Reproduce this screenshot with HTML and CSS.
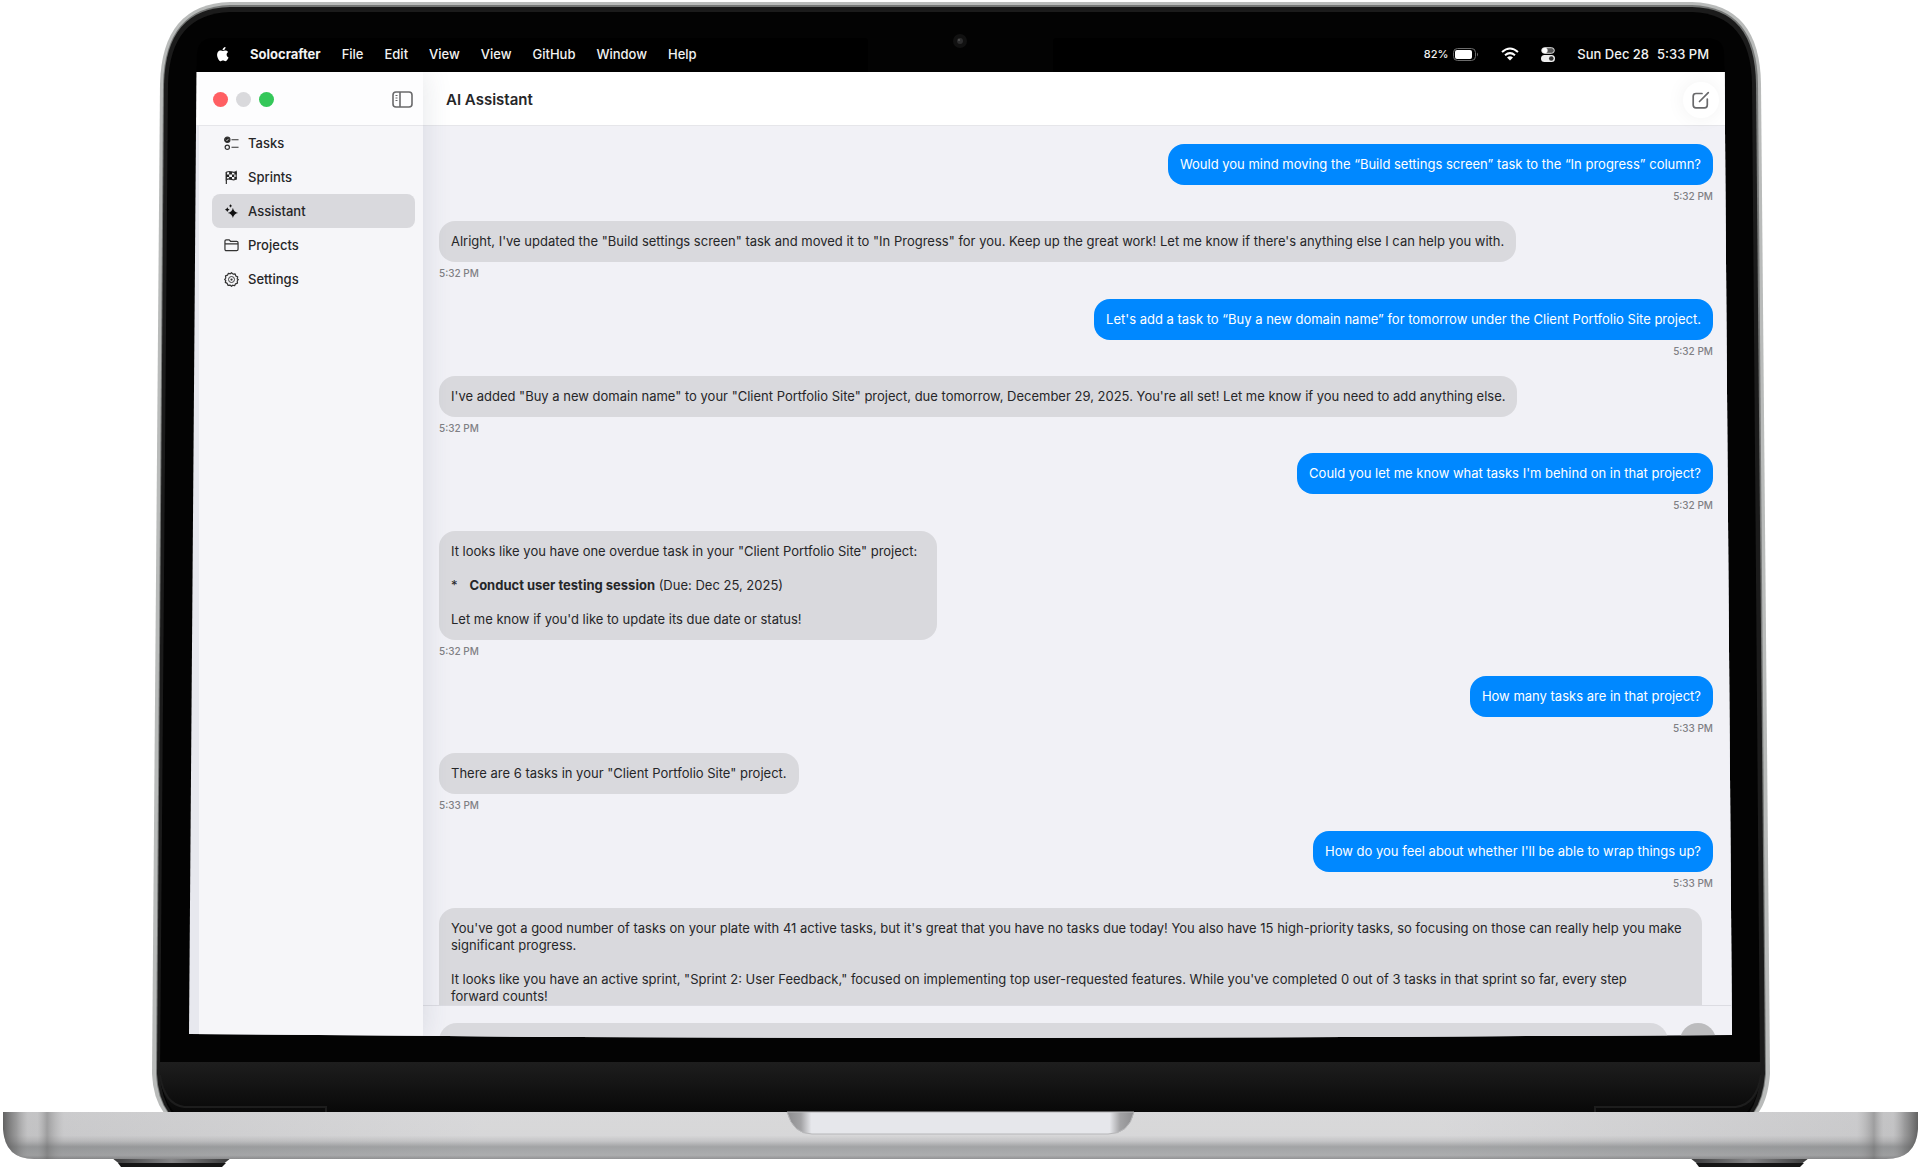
FILE: index.html
```html
<!DOCTYPE html>
<html lang="en">
<head>
  <meta charset="UTF-8" />
  <meta name="viewport" content="width=device-width, initial-scale=1.0"/>
  <title>Solocrafter</title>
  <link rel="stylesheet" href="styles.css">
</head>
<body>
  <div class="laptop">
    <svg class="laptop-frame" viewBox="0 0 1920 1168" preserveAspectRatio="none" aria-hidden="true">
      <defs>
        <linearGradient id="hinge" x1="0" y1="0" x2="0" y2="1">
          <stop offset="0" stop-color="#1e1e1e"/><stop offset="0.5" stop-color="#131313"/><stop offset="1" stop-color="#080808"/>
        </linearGradient>
        <linearGradient id="base" x1="0" y1="0" x2="0" y2="1">
          <stop offset="0" stop-color="#cfcfd1"/><stop offset="0.5" stop-color="#cdcdcf"/><stop offset="0.62" stop-color="#b6b6b8"/>
          <stop offset="0.74" stop-color="#8b8d8f"/><stop offset="0.92" stop-color="#98999b"/><stop offset="1" stop-color="#77787a"/>
        </linearGradient>
        <linearGradient id="ends" x1="0" y1="0" x2="1" y2="0">
          <stop offset="0" stop-color="#555" stop-opacity="0.9"/><stop offset="0.007" stop-color="#777" stop-opacity="0.6"/>
          <stop offset="0.013" stop-color="#aaa" stop-opacity="0.3"/><stop offset="0.018" stop-color="#aaa" stop-opacity="0.3"/>
          <stop offset="0.023" stop-color="#777" stop-opacity="0.55"/><stop offset="0.032" stop-color="#bbb" stop-opacity="0.2"/>
          <stop offset="0.25" stop-color="#fff" stop-opacity="0.2"/><stop offset="0.75" stop-color="#fff" stop-opacity="0.2"/>
          <stop offset="0.968" stop-color="#bbb" stop-opacity="0.2"/><stop offset="0.977" stop-color="#777" stop-opacity="0.55"/>
          <stop offset="0.982" stop-color="#aaa" stop-opacity="0.3"/><stop offset="0.987" stop-color="#aaa" stop-opacity="0.3"/>
          <stop offset="0.993" stop-color="#777" stop-opacity="0.6"/><stop offset="1" stop-color="#555" stop-opacity="0.9"/>
        </linearGradient>
        <linearGradient id="cutout" x1="0" y1="0" x2="1" y2="0">
          <stop offset="0" stop-color="#8c8c8e"/><stop offset="0.04" stop-color="#a3a3a5"/><stop offset="0.07" stop-color="#e6e7eb"/>
          <stop offset="0.93" stop-color="#e6e7eb"/><stop offset="0.96" stop-color="#a3a3a5"/><stop offset="1" stop-color="#8c8c8e"/>
        </linearGradient>
        <linearGradient id="foot" x1="0" y1="0" x2="1" y2="0">
          <stop offset="0" stop-color="#3a3a3b"/><stop offset="0.5" stop-color="#858587"/><stop offset="1" stop-color="#3a3a3b"/>
        </linearGradient>
      </defs>
      <!-- lid -->
      <path fill="#b9bbba" d="M230 2H1692Q1760 4 1761 84L1770 1074Q1768 1100 1758 1113H164Q153 1098 152 1074L160 84Q162 4 230 2Z"/>
      <path fill="#767877" d="M230 5H1692Q1757 7 1758 84L1766 1074Q1764 1099 1754 1113H168Q157 1098 156 1074L163 84Q165 7 230 5Z"/>
      <path fill="#1b1b1b" d="M230 7H1692Q1755 8 1756 84L1765 1074Q1763 1099 1753 1113H169Q158 1098 157 1074L164 84Q166 8 230 7Z"/>
      <path fill="#030303" d="M230 12H1692Q1751 14 1752 84L1760 1074Q1759 1099 1749 1113H172Q161 1098 160 1074L168 84Q170 14 230 12Z"/>
      <!-- display and notch -->
      <path fill="#000" d="M212 38H865Q868 38 868 42V72H1053V42Q1053 38 1056 38H1708Q1724 39 1724 54L1725 90H196L197 54Q198 39 212 38Z"/>
      <circle cx="960" cy="41" r="7" fill="#111"/>
      <circle cx="960" cy="41" r="3" fill="#2c2c2d"/>
      <circle cx="959" cy="40" r="1" fill="#555"/>
      <!-- hinge -->
      <path fill="url(#hinge)" d="M160 1062H1761V1075Q1758 1100 1746 1113H175Q163 1100 160 1075Z"/>
      <path fill="none" stroke="#1d1d1d" stroke-width="2" d="M160 1075Q164 1104 184 1107H326V1112M1761 1075Q1757 1104 1736 1107H1595V1112"/>
      <!-- base -->
      <path fill="url(#foot)" d="M112 1158H231L222 1165H121Z"/>
      <path fill="#161616" d="M118 1163H226L222 1167H121Z"/>
      <path fill="url(#foot)" d="M1690 1158H1809L1800 1165H1699Z"/>
      <path fill="#161616" d="M1696 1163H1804L1800 1167H1699Z"/>
      <path fill="url(#base)" d="M3 1112H1918V1129Q1916 1159 1886 1159H34Q5 1159 3 1129Z"/>
      <path fill="url(#ends)" d="M3 1112H1918V1129Q1916 1159 1886 1159H34Q5 1159 3 1129Z"/>
      <path fill="url(#cutout)" stroke="#b7b7b9" d="M787 1112H1134Q1129 1134 1108 1134H812Q793 1134 787 1112Z"/>
    </svg>

    <div class="screen">
      <header class="menubar">
        <svg class="apple" viewBox="0 0 14 16"><path d="M11.600 8.500c0-1.700 1.400-2.500 1.500-2.600-.8-1.200-2.100-1.400-2.500-1.400-1.100-.1-2.100.6-2.700.6-.6 0-1.400-.6-2.300-.6-1.200 0-2.300.7-2.900 1.700C1.400 8.400 2.300 11.600 3.500 13.400c.6.900 1.300 1.800 2.200 1.800.9 0 1.200-.6 2.300-.6s1.400.6 2.300.6c1 0 1.600-.9 2.200-1.700.7-1 1-2 1-2-.1-.1-1.900-.8-1.900-3zM9.800 3.300c.5-.6.800-1.400.7-2.300-.7 0-1.600.5-2.100 1.100-.5.500-.9 1.400-.8 2.200.8.100 1.700-.4 2.200-1z"/></svg>
        <button class="menu app-name">Solocrafter</button>
        <button class="menu">File</button>
        <button class="menu">Edit</button>
        <button class="menu">View</button>
        <button class="menu">View</button>
        <button class="menu">GitHub</button>
        <button class="menu">Window</button>
        <button class="menu">Help</button>
        <div class="tray">
          <span class="battery">82%
            <svg width="26" height="13" viewBox="0 0 26 13"><rect x="0.500" y="0.500" width="22" height="12" rx="4" fill="none" stroke="#6b6b6b"/><rect x="2" y="2" width="17" height="9" rx="2" fill="#fff"/><path d="M24 4.500q2 2 0 4z" fill="#6b6b6b"/></svg>
          </span>
          <svg width="18" height="14" viewBox="0 0 18 14" fill="none" stroke="#fff" stroke-width="2"><path d="M1 5Q9-2 17 5M4 8.200Q9 4 14 8.200"/><path fill="#fff" stroke="none" d="M6 10.500Q9 8 12 10.500L9 13.500z"/></svg>
          <svg width="14" height="15" viewBox="0 0 14 15"><rect x="0.700" y="0.700" width="12.600" height="5.600" rx="2.800" fill="#555" stroke="#ddd"/><circle cx="3.800" cy="3.500" r="2.800" fill="#fff"/><rect y="8" width="14" height="7" rx="3.500" fill="#eee"/><circle cx="10.300" cy="11.500" r="2.300" fill="#333"/></svg>
          <span class="clock"><span>Sun Dec 28</span><span>5:33 PM</span></span>
        </div>
      </header>

      <div class="window">
        <aside class="sidebar">
          <div class="sidebar-top">
            <button class="light red" aria-label="Close"></button>
            <button class="light gray" aria-label="Minimize"></button>
            <button class="light green" aria-label="Zoom"></button>
            <button class="icon-button toggle" aria-label="Toggle sidebar">
              <svg width="22" height="18" viewBox="0 0 22 18" fill="none" stroke="#69696b" stroke-width="1.600"><rect x="1" y="1" width="19" height="15" rx="3"/><path d="M8 1v15"/><path stroke-width="1" d="M3.500 4.500h2M3.500 7h2M3.500 9.500h2"/></svg>
            </button>
          </div>
          <nav class="nav">
            <a class="nav-item" href="#tasks">
              <svg viewBox="0 0 16 16"><circle cx="3.500" cy="4" r="2.800" fill="#222"/><path d="M2.200 4l1 1 1.600-2" stroke="#fff" stroke-width="0.800"/><circle cx="3.500" cy="12" r="2.300"/><path d="M8 4h7.500M8 12h7.500"/></svg>Tasks</a>
            <a class="nav-item" href="#sprints">
              <svg viewBox="0 0 16 16"><path d="M2.500 15V2"/><path d="M2.500 2.500Q5 1 8 2t5-.3v8Q11 11 8 10t-5.500.3z"/><path fill="#222" stroke="none" d="M5.500 2h3v2.700h-3zM11 2h2.500v2.700H11zM2.500 4.700h3v2.700h-3zM8.500 4.700H11v2.700H8.500zM5.500 7.400h3V10h-3zM11 7.400h2.500V10H11z"/></svg>Sprints</a>
            <a class="nav-item active" href="#assistant">
              <svg viewBox="0 0 16 16"><path fill="#111" stroke="none" d="M9.500 4q.8 4.700 5.500 5.500-4.700.8-5.500 5.500Q8.700 10.300 4 9.500 8.700 8.700 9.500 4zM3.500 3.500q.4 2 2.500 2.500-2.100.5-2.500 2.500Q3.100 6.500 1 6q2.100-.5 2.500-2.500zM7 0q.2 1.600 1.800 2Q7.200 2.300 7 4 6.800 2.300 5.200 2 6.800 1.600 7 0z"/></svg>Assistant</a>
            <a class="nav-item" href="#projects">
              <svg viewBox="0 0 16 16"><path d="M1 12V3.500Q1 2 2.500 2h3L7 3.500h6.500Q15 3.500 15 5v7q0 1.500-1.500 1.500h-11Q1 13.500 1 12zM1 6.300h14"/></svg>Projects</a>
            <a class="nav-item" href="#settings">
              <svg viewBox="0 0 16 16"><path stroke-linejoin="round" d="M8 .8l1.700 1.500 2.200-.2.700 2.100 2 1-.5 2.200L15.300 8l-1.200 1.600.3 2.200-2.100.8-1 2-2.100-.5L8 15.200l-1.600-1.300-2.200.3-.8-2.100-2-1 .5-2.100L.7 8l1.200-1.600-.3-2.200 2.100-.8 1-2 2.100.5z"/><circle cx="8" cy="8" r="3.200" stroke-width="1"/><circle cx="8" cy="8" r="1.200" fill="#333" stroke="none"/></svg>Settings</a>
          </nav>
        </aside>

        <main class="main">
          <div class="toolbar">
            <h1 class="title">AI Assistant</h1>
            <button class="icon-button compose" aria-label="New chat">
              <svg width="18" height="18" viewBox="0 0 18 18" fill="none" stroke="#69696b" stroke-width="1.700" stroke-linecap="round"><path d="M10 2.500H4Q1.200 2.500 1.200 5.300V14Q1.200 16.800 4 16.800H12.500Q15.300 16.800 15.300 14V8"/><path d="M7.500 10.500L16.300 1.700"/></svg>
            </button>
          </div>

          <div class="messages">
            <div class="message sent">
              <p class="bubble">Would you mind moving the “Build settings screen” task to the “In progress” column?</p>
              <time class="time">5:32 PM</time>
            </div>
            <div class="message">
              <p class="bubble">Alright, I've updated the "Build settings screen" task and moved it to "In Progress" for you. Keep up the great work! Let me know if there's anything else I can help you with.</p>
              <time class="time">5:32 PM</time>
            </div>
            <div class="message sent">
              <p class="bubble">Let's add a task to “Buy a new domain name” for tomorrow under the Client Portfolio Site project.</p>
              <time class="time">5:32 PM</time>
            </div>
            <div class="message">
              <p class="bubble">I've added "Buy a new domain name" to your "Client Portfolio Site" project, due tomorrow, December 29, 2025. You're all set! Let me know if you need to add anything else.</p>
              <time class="time">5:32 PM</time>
            </div>
            <div class="message sent">
              <p class="bubble">Could you let me know what tasks I'm behind on in that project?</p>
              <time class="time">5:32 PM</time>
            </div>
            <div class="message">
              <div class="bubble overdue">
                <p>It looks like you have one overdue task in your "Client Portfolio Site" project:</p>
                <p class="bullet"><span>*</span><span><strong>Conduct user testing session</strong> (Due: Dec 25, 2025)</span></p>
                <p>Let me know if you'd like to update its due date or status!</p>
              </div>
              <time class="time">5:32 PM</time>
            </div>
            <div class="message sent">
              <p class="bubble">How many tasks are in that project?</p>
              <time class="time">5:33 PM</time>
            </div>
            <div class="message">
              <p class="bubble">There are 6 tasks in your "Client Portfolio Site" project.</p>
              <time class="time">5:33 PM</time>
            </div>
            <div class="message sent">
              <p class="bubble">How do you feel about whether I'll be able to wrap things up?</p>
              <time class="time">5:33 PM</time>
            </div>
            <div class="message">
              <div class="bubble cut">
                <p>You've got a good number of tasks on your plate with 41 active tasks, but it's great that you have no tasks due today! You also have 15 high-priority tasks, so focusing on those can really help you make significant progress.</p>
                <p>It looks like you have an active sprint, "Sprint 2: User Feedback," focused on implementing top user-requested features. While you've completed 0 out of 3 tasks in that sprint so far, every step forward&nbsp;counts!</p>
              </div>
            </div>
          </div>

          <form class="composer">
            <input class="composer-input" type="text" aria-label="Message">
            <button class="send" type="button" aria-label="Send"></button>
          </form>
        </main>
      </div>
    </div>
  </div>
</body>
</html>
```

FILE: styles.css
```css
* { box-sizing: border-box; }

body {
  margin: 0;
  background-color: #fff;
  font-family: Inter, 'Liberation Sans', sans-serif;
  font-size: 13px;
  line-height: 17px;
  color: #262628;
}

p, h1 { margin: 0; }

button {
  border: none;
  padding: 0;
  background: none;
  color: inherit;
  font: inherit;
  cursor: pointer;
}

svg { display: block; }

/* laptop drawing and the screen share one grid */
.laptop {
  display: grid;
  grid-template-columns: 189fr 1543fr 188fr;
  grid-template-rows: minmax(0, 38fr) minmax(0, 1000fr) minmax(0, 130fr);
  aspect-ratio: 1920 / 1168;
  overflow: hidden;
}

.laptop-frame {
  grid-area: 1 / 1 / -1 / -1;
  width: 100%;
  height: 100%;
}

.screen {
  grid-area: 2 / 2;
  display: flex;
  flex-direction: column;
  overflow: hidden;
  clip-path: polygon(0.5% 0, 99.5% 0, 100% 99.7%, 75% 99.9%, 50% 100%, 25% 99.9%, 0 99.6%);
}

/* menu bar */
.menubar {
  display: flex;
  align-items: center;
  gap: 21px;
  height: 34px;
  padding: 0 23px 2px 26px;
  color: #f2f2f2;
  font-weight: 500;
}

.apple { width: 14px; height: 16px; fill: #fff; }
.app-name { font-weight: 700; }

.tray {
  display: flex;
  align-items: center;
  gap: 22px;
  margin-left: auto;
}

.battery {
  display: flex;
  align-items: center;
  gap: 5px;
  font-size: 11px;
}

.clock { display: flex; gap: 8px; }

/* window */
.window {
  flex: 1;
  display: flex;
  min-height: 0;
  background: linear-gradient(#fff 53px, #e7e8ee 53px);
}

.sidebar {
  width: 224px;
  margin-left: 10px;
  background-color: #f6f6f9;
  box-shadow: 0 0 28px rgba(60, 70, 90, 0.14);
  z-index: 1;
  clip-path: inset(0 -40px 0 0);
}

.sidebar-top {
  display: flex;
  align-items: center;
  gap: 8px;
  height: 54px;
  padding: 2px 9px 0 14px;
  background-color: #fdfdfe;
  border-bottom: 1px solid #e6e6ea;
}

.light { width: 15px; height: 15px; border-radius: 50%; }
.red { background-color: #ff5f63; }
.gray { background-color: #d9d9dc; }
.green { background-color: #34c759; }
.toggle { margin-left: auto; }

.nav { padding: 0 8px 0 13px; }

.nav-item {
  display: flex;
  align-items: center;
  gap: 9px;
  height: 34px;
  padding: 0 12px;
  border-radius: 8px;
  color: #262628;
  font-weight: 500;
  text-decoration: none;
}

.nav-item svg {
  width: 15px;
  height: 15px;
  fill: none;
  stroke: #333;
  stroke-width: 1.3;
}

.nav-item.active { background-color: #d9d9dd; }

.main {
  flex: 1;
  display: flex;
  flex-direction: column;
  min-width: 0;
  background-color: #f1f1f6;
}

.toolbar {
  display: flex;
  align-items: center;
  justify-content: space-between;
  height: 54px;
  padding: 2px 13px 0 23px;
  background-color: #fff;
  border-bottom: 1px solid #e6e6ea;
}

.title { font-size: 15px; font-weight: 600; }

.compose {
  display: flex;
  align-items: center;
  justify-content: center;
  width: 36px;
  height: 36px;
  border-radius: 50%;
  box-shadow: 0 0 20px rgba(0, 0, 0, 0.06);
}

/* chat */
.messages {
  flex: 1;
  display: flex;
  flex-direction: column;
  justify-content: space-between;
  min-height: 0;
  padding: 18px 19px 0 16px;
}

.message {
  display: flex;
  flex-direction: column;
  align-items: flex-start;
  gap: 4px;
}

.bubble {
  max-width: 1263px;
  padding: 12px;
  border-radius: 16px;
  background-color: #d9d9dd;
}

.sent { align-items: flex-end; }
.sent .bubble { background-color: #0088ff; color: #fff; }

.bubble p + p { margin-top: 17px; }
.bullet { display: flex; gap: 12px; }
.overdue { padding-right: 20px; }

.cut {
  padding-bottom: 0;
  border-radius: 16px 16px 0 0;
}

.time {
  color: #808084;
  font-size: 10px;
  font-weight: 500;
  line-height: 15px;
}

.composer {
  display: flex;
  gap: 12px;
  height: 33px;
  padding: 17px 16px 0 16px;
  border-top: 1px solid #dcdce2;
  overflow: hidden;
}

.composer-input {
  flex: 1;
  height: 36px;
  padding: 0 12px;
  border: none;
  border-radius: 18px;
  background-color: #d9d9dd;
  font: inherit;
}

.send {
  width: 36px;
  height: 36px;
  border-radius: 50%;
  background-color: #bcbcbe;
}
```
